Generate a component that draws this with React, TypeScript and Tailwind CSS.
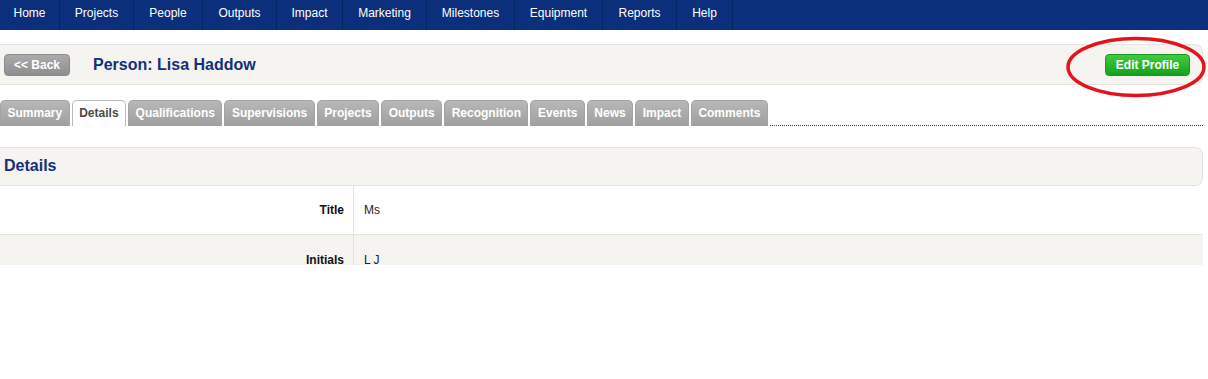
import React from 'react'

const navItems: [string, string][] = [
  ['Home', 'w-[60px]'],
  ['Projects', 'w-[74px]'],
  ['People', 'w-[69px]'],
  ['Outputs', 'w-[74px]'],
  ['Impact', 'w-[66px]'],
  ['Marketing', 'w-[84px]'],
  ['Milestones', 'w-[88px]'],
  ['Equipment', 'w-[88px]'],
  ['Reports', 'w-[74px]'],
  ['Help', 'w-[56px]'],
]

const tabs = ['Summary', 'Details', 'Qualifications', 'Supervisions', 'Projects', 'Outputs', 'Recognition', 'Events', 'News', 'Impact', 'Comments']

function Tab({ label, active }: { label: string; active: boolean }) {
  if (active) {
    return (
      <div className="h-[26px] px-[6.5px] pb-[2px] flex items-center rounded-t-[5px] border border-b-0 border-[#b9b9b9] bg-white text-[#4a4a4a] font-bold">
        {label}
      </div>
    )
  }
  return (
    <div className="h-[26px] px-[6.5px] pb-[2px] flex items-center rounded-t-[5px] border border-b-0 border-[#a3a3a3] bg-gradient-to-b from-[#b8b8b8] to-[#9e9e9e] text-white font-bold">
      {label}
    </div>
  )
}

export default function App() {
  return (
    <div className="w-[1208px] h-[379px] bg-white font-['Liberation_Sans',Arial,sans-serif] text-[12px]">
      {/* top navigation */}
      <nav className="h-[30px] bg-[#0b2f7a] flex">
        {navItems.map(([name, w]) => (
          <div key={name} className={`${w} h-full flex items-start pt-[4px] justify-center text-white border-r border-[#06235f]`}>
            {name}
          </div>
        ))}
      </nav>

      <div className="h-[235px] overflow-hidden pr-[5px] pt-[14px]">
        {/* header bar */}
        <div className="relative h-[41px] bg-[#f5f4f0] border-y border-[#e6e4df] rounded-r-[8px] border-r flex items-center pl-[4px] pr-[12px]">
          <button className="h-[22px] w-[66px] rounded-[4px] bg-gradient-to-b from-[#ababab] to-[#8e8e8e] border border-[#8a8a8a] text-white font-bold">
            &lt;&lt; Back
          </button>
          <h1 className="ml-[23px] text-[16px] font-bold text-[#14307a]">Person: Lisa Haddow</h1>
          <button className="ml-auto h-[22px] w-[85px] rounded-[4px] bg-gradient-to-b from-[#3fcb3f] to-[#14a21c] border border-[#169a1d] text-white font-bold">
            Edit Profile
          </button>
          <svg className="absolute left-[1065px] top-[-9px]" width="142" height="62" viewBox="0 0 142 62">
            <ellipse cx="71" cy="31" rx="68" ry="28.5" fill="none" stroke="#e5141c" strokeWidth="3.5" />
          </svg>
        </div>

        {/* tabs */}
        <div className="flex items-end gap-[2px] mt-[15px] h-[26px]">
          {tabs.map((t) => (
            <Tab key={t} label={t} active={t === 'Details'} />
          ))}
          <div className="flex-1 self-end border-b border-dotted border-[#444]" />
        </div>

        {/* details panel */}
        <div className="mt-[21px]">
          <div className="h-[39px] bg-[#f5f4f0] border border-l-0 border-[#e4e2dd] rounded-r-[8px] flex items-center pl-[4px] pb-[2px]">
            <h2 className="text-[16px] font-bold text-[#14307a]">Details</h2>
          </div>
          <div className="flex h-[49px] bg-white border-b border-[#e4e2dd]">
            <div className="w-[354px] border-r border-[#e4e2dd] flex items-center justify-end pr-[9px] font-bold text-[#111]">Title</div>
            <div className="flex items-center pl-[10px] text-[#222]">Ms</div>
          </div>
          <div className="flex h-[49px] bg-[#f5f4f0]">
            <div className="w-[354px] border-r border-[#e4e2dd] flex items-center justify-end pr-[9px] font-bold text-[#111]">Initials</div>
            <div className="flex items-center pl-[10px] text-[#222]">L J</div>
          </div>
        </div>
      </div>
    </div>
  )
}
